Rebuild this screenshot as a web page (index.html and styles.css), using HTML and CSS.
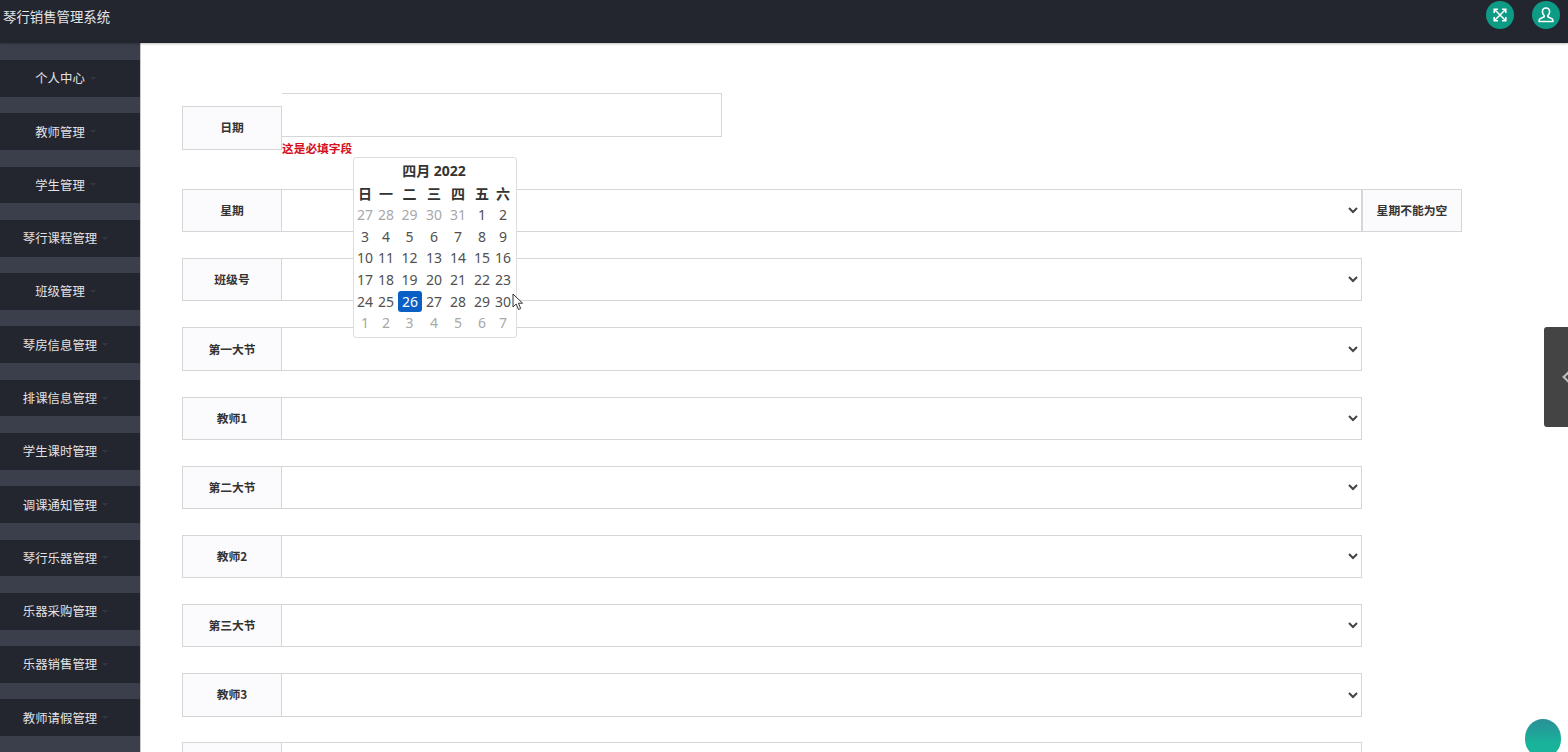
FILE: index.html
```html
<!DOCTYPE html>
<html lang="zh-CN">
<head>
<meta charset="utf-8">
<title>琴行销售管理系统</title>
<link rel="stylesheet" href="styles.css">
</head>
<body>
<header class="topbar">
  <div class="brand">琴行销售管理系统</div>
  <div class="top-actions">
    <span class="round-btn">
      <svg viewBox="0 0 16 16" width="16" height="16" fill="none" stroke="#fff" stroke-width="1.5"><path d="M3 3l10 10M13 3L3 13"/><path d="M2.2 6V2.2H6M10 2.2h3.8V6M13.8 10v3.8H10M6 13.8H2.2V10" stroke-width="1.6"/></svg>
    </span>
    <span class="round-btn">
      <svg viewBox="0 0 16 16" width="18" height="18" fill="none" stroke="#fff" stroke-width="1.4"><path d="M8 1.800c-2 0-3.200 1.500-3.200 3.400 0 1.400.6 2.600 1.600 3.400v1L2.600 11.400c-.5.3-.7.7-.7 1.200v1.200h12.200v-1.200c0-.5-.2-.9-.7-1.200L9.600 9.600v-1c1-.8 1.600-2 1.600-3.400 0-1.900-1.200-3.400-3.200-3.400z"/></svg>
    </span>
  </div>
</header>
<div class="shell">
  <nav class="sidebar">
    <a class="nav-item"><span>个人中心</span><i class="caret"></i></a>
    <a class="nav-item"><span>教师管理</span><i class="caret"></i></a>
    <a class="nav-item"><span>学生管理</span><i class="caret"></i></a>
    <a class="nav-item"><span>琴行课程管理</span><i class="caret"></i></a>
    <a class="nav-item"><span>班级管理</span><i class="caret"></i></a>
    <a class="nav-item"><span>琴房信息管理</span><i class="caret"></i></a>
    <a class="nav-item"><span>排课信息管理</span><i class="caret"></i></a>
    <a class="nav-item"><span>学生课时管理</span><i class="caret"></i></a>
    <a class="nav-item"><span>调课通知管理</span><i class="caret"></i></a>
    <a class="nav-item"><span>琴行乐器管理</span><i class="caret"></i></a>
    <a class="nav-item"><span>乐器采购管理</span><i class="caret"></i></a>
    <a class="nav-item"><span>乐器销售管理</span><i class="caret"></i></a>
    <a class="nav-item"><span>教师请假管理</span><i class="caret"></i></a>
  </nav>
  <main class="content">
    <div class="date-row">
      <label class="field-label date-label">日期</label>
      <div class="date-field">
        <input class="date-input" type="text">
        <div class="error">这是必填字段</div>
      </div>
    </div>
    <div class="row">
      <label class="field-label">星期</label>
      <select class="field-select"><option></option></select>
      <span class="field-label hint">星期不能为空</span>
    </div>
    <div class="row"><label class="field-label">班级号</label><select class="field-select"><option></option></select></div>
    <div class="row"><label class="field-label">第一大节</label><select class="field-select"><option></option></select></div>
    <div class="row"><label class="field-label">教师1</label><select class="field-select"><option></option></select></div>
    <div class="row"><label class="field-label">第二大节</label><select class="field-select"><option></option></select></div>
    <div class="row"><label class="field-label">教师2</label><select class="field-select"><option></option></select></div>
    <div class="row"><label class="field-label">第三大节</label><select class="field-select"><option></option></select></div>
    <div class="row"><label class="field-label">教师3</label><select class="field-select"><option></option></select></div>
    <div class="row"><label class="field-label"></label><select class="field-select"><option></option></select></div>
  </main>
</div>

<div class="calendar">
  <div class="cal-title">四月 2022</div>
  <div class="cal-grid">
    <b>日</b><b>一</b><b>二</b><b>三</b><b>四</b><b>五</b><b>六</b>
    <span class="off">27</span><span class="off">28</span><span class="off">29</span><span class="off">30</span><span class="off">31</span><span>1</span><span>2</span>
    <span>3</span><span>4</span><span>5</span><span>6</span><span>7</span><span>8</span><span>9</span>
    <span>10</span><span>11</span><span>12</span><span>13</span><span>14</span><span>15</span><span>16</span>
    <span>17</span><span>18</span><span>19</span><span>20</span><span>21</span><span>22</span><span>23</span>
    <span>24</span><span>25</span><span class="active">26</span><span>27</span><span>28</span><span>29</span><span>30</span>
    <span class="off">1</span><span class="off">2</span><span class="off">3</span><span class="off">4</span><span class="off">5</span><span class="off">6</span><span class="off">7</span>
  </div>
</div>

<svg class="cursor" viewBox="0 0 12 18" width="12" height="18"><path d="M1 1v13l3.200-3 2.300 5.500 2.200-1-2.300-5.300H10.500z" fill="#fff" stroke="#333" stroke-width="1"/></svg>

<div class="side-handle"><i class="handle-mark"></i></div>
<div class="orb"></div>
</body>
</html>
```
FILE: styles.css
```css
* { box-sizing: border-box; }
html, body { margin: 0; height: 100%; }
body {
  height: 752px;
  overflow: hidden;
  background: #fff;
  color: #333;
  font-family: "Noto Sans", "Noto Sans CJK SC", sans-serif;
  position: relative;
}
.topbar {
  height: 43px;
  background: #23252f;
  display: flex;
  justify-content: space-between;
  padding: 1px 8px 0 3px;
  box-shadow: 0 1px 2px rgba(0,0,0,.25);
  position: relative;
  z-index: 2;
}
.brand {
  color: #e4e4e6;
  font-size: 13.4px;
  line-height: 30px;
  font-family: "Noto Sans CJK SC", sans-serif;
}
.top-actions { display: flex; gap: 18px; }
.round-btn {
  width: 28px;
  height: 28px;
  border-radius: 50%;
  background: #0e9b85;
  display: flex;
  align-items: center;
  justify-content: center;
}
.shell { display: flex; height: 709px; overflow: hidden; }
.sidebar {
  width: 141px;
  flex: none;
  background: #3a3f4b;
  border-right: 1px solid #c8c8c8;
  padding-top: 17px;
  display: flex;
  flex-direction: column;
  gap: 16.6px;
}
.nav-item {
  height: 36.7px;
  flex: none;
  background: #23252f;
  color: #e2e2e4;
  font-size: 12.4px;
  font-family: "Noto Sans CJK SC", sans-serif;
  display: flex;
  align-items: center;
  justify-content: center;
  padding-right: 8px;
}
.caret {
  width: 0;
  height: 0;
  margin: 0 0 0 4px;
  border-left: 4px solid transparent;
  border-right: 4px solid transparent;
  border-top: 3px solid #32343e;
}
.content {
  flex: 1;
  padding: 50px 0 0 41px;
  display: flex;
  flex-direction: column;
  gap: 25.9px;
  min-width: 0;
}
.field-label {
  width: 100px;
  height: 100%;
  flex: none;
  border: 1px solid #d6d6d6;
  background: #fbfafc;
  color: #333;
  font-size: 11.8px;
  font-weight: 700;
  font-family: "Noto Sans CJK SC", sans-serif;
  display: flex;
  align-items: center;
  justify-content: center;
  padding-bottom: 2px;
}
.date-row { display: flex; height: 70.1px; flex: none; }
.date-label { height: 44px; margin-top: 13px; padding-bottom: 3px; }
.date-field { width: 440px; }
.date-input {
  display: block;
  width: 100%;
  height: 44px;
  border: 1px solid #d6d6d6;
  border-left: 0;
  background: #fff;
  outline: 0;
}
.error {
  color: #d4101c;
  font-size: 11.7px;
  font-weight: 700;
  line-height: 22px;
  font-family: "Noto Sans CJK SC", sans-serif;
}
.row { display: flex; height: 43.3px; flex: none; }
.field-select {
  width: 1080px;
  height: 100%;
  flex: none;
  border: 1px solid #d6d6d6;
  border-left: 0;
  border-radius: 0;
  background-color: #fff;
  color: #444;
  padding: 0 6px;
  outline: 0;
}
.hint { border-left-width: 1px; }
.calendar {
  position: absolute;
  left: 353px;
  top: 157px;
  width: 164px;
  height: 181px;
  background: #fff;
  border: 1px solid #dedede;
  border-radius: 3px;
  padding: 2px 1px 0;
  z-index: 3;
}
.cal-title {
  text-align: center;
  font-size: 14px;
  font-weight: 700;
  line-height: 22.5px;
  color: #333;
  padding-right: 2px;
}
.cal-grid {
  display: grid;
  grid-template-columns: 20px 22px 25px 24px 24px 24px 18px;
  grid-auto-rows: 21.65px;
  font-size: 14px;
  text-align: center;
  line-height: 21.65px;
  color: #505050;
}
.cal-grid b {
  font-weight: 700;
  color: #333;
  font-family: "Noto Sans CJK SC", sans-serif;
}
.off { color: #a8a8a8; }
.active {
  background: #0a5fc4;
  color: #fff;
  border-radius: 3px;
  margin: 0 0 0 1px;
}
.cursor { position: absolute; left: 512px; top: 293px; z-index: 4; }
.side-handle {
  position: absolute;
  left: 1544px;
  top: 327px;
  width: 24px;
  height: 100px;
  background: #444;
  border-radius: 3px 0 0 3px;
  overflow: hidden;
  z-index: 3;
}
.handle-mark {
  position: absolute;
  left: 20px;
  top: 46px;
  width: 8px;
  height: 8px;
  border-left: 2px solid #bbb;
  border-bottom: 2px solid #bbb;
  transform: rotate(45deg);
}
.orb {
  position: absolute;
  left: 1525px;
  top: 719px;
  width: 36px;
  height: 38px;
  border-radius: 50% 50% 46% 46%;
  background: linear-gradient(#2a8f97, #18b39a 65%);
  z-index: 3;
}
```
